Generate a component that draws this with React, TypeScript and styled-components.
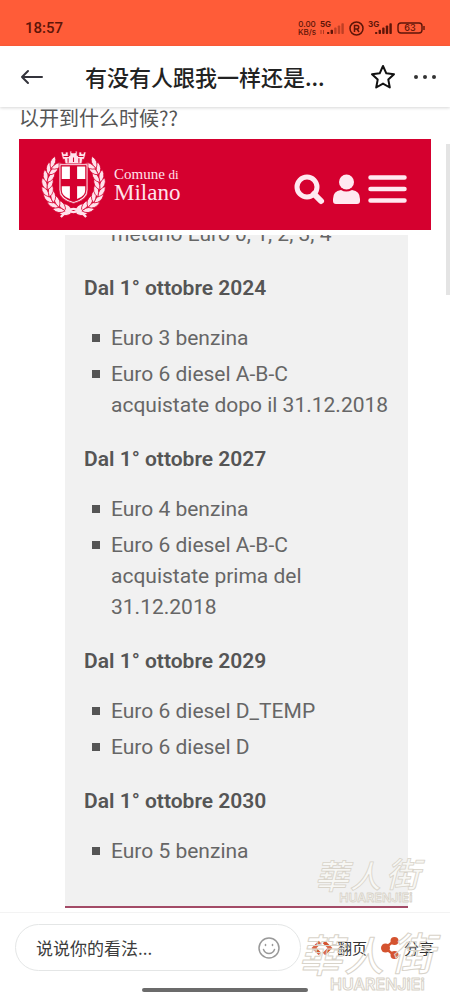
import React from "react";
import styled, { createGlobalStyle } from "styled-components";

const Global = createGlobalStyle`
  *, *::before, *::after { box-sizing: border-box; }
  body { margin: 0; background: #fff; font-family: "Noto Sans CJK SC", sans-serif; }
  button, input { font: inherit; color: inherit; border: 0; background: none; padding: 0; margin: 0; }
  h1, h2, p, ul { margin: 0; padding: 0; font-weight: inherit; }
  svg { display: block; flex: none; overflow: visible; }
`;

const Screen = styled.div`
  min-height: 100vh;
  display: flex;
  flex-direction: column;
`;

const StatusBar = styled.div`
  height: 46px;
  padding: 10px 25px 0 25px;
  display: flex;
  align-items: center;
  justify-content: space-between;
  background: #ff5c38;
  color: #5e1508;
`;

const Clock = styled.span`
  font: 500 15px/20px Roboto, sans-serif;
`;

const StatusIcons = styled.div`
  display: flex;
  align-items: center;
  gap: 4px;
`;

const NetSpeed = styled.span`
  font: 500 8px/8px Inter, sans-serif;
  text-align: center;
`;

const TitleBar = styled.header`
  position: relative;
  height: 61px;
  padding: 0 13px 0 20px;
  display: flex;
  align-items: center;
  color: #222;
  background: #fff;
  box-shadow: 0 1px 3px rgba(0, 0, 0, 0.16);
`;

const Title = styled.h1`
  flex: 1;
  margin: 0 32px 0 41px;
  padding-bottom: 2px;
  font-size: 22px;
  line-height: 32px;
  font-weight: 500;
  white-space: nowrap;
  overflow: hidden;
`;

const IconButton = styled.button`
  display: flex;
  align-items: center;
  justify-content: center;
  & + & { margin-left: 17px; }
`;

const Content = styled.main`
  position: relative;
  flex: 1;
  padding: 0 19px 4px;
`;

const ScrollThumb = styled.div`
  position: absolute;
  top: 37px;
  right: 0;
  width: 4px;
  height: 151px;
  background: #e4e4e4;
`;

const PostText = styled.p`
  font-size: 20px;
  line-height: 22px;
  padding-bottom: 10px;
  color: #555;
`;

const SiteHeader = styled.div`
  height: 91px;
  padding: 0 24px 0 22px;
  display: flex;
  align-items: center;
  background: #d5002f;
  color: #ffe3ec;
`;

const Brand = styled.div`
  flex: 1;
  margin-left: 8px;
  font-family: "Liberation Serif", serif;
`;

const BrandTop = styled.div`
  font-size: 15px;
  line-height: 16px;
`;

const BrandSmall = styled.span`
  font-size: 13px;
`;

const BrandName = styled.div`
  font-size: 23px;
  line-height: 20px;
`;

const SiteActions = styled.div`
  display: flex;
  align-items: center;
  gap: 8px;
  padding-top: 8px;
`;

const SiteButton = styled.button`
  display: block;
  color: #ffe9f1;
`;

const Panel = styled.section`
  margin: 5px 23px 0 46px;
  padding: 0 19px 39px;
  background: #f1f1f1;
  border-bottom: 2px solid #a34b67;
  color: #666;
  font: 400 21px/31px Roboto, sans-serif;
`;

const Clipped = styled.div`
  height: 15px;
  padding-left: 27px;
  display: flex;
  align-items: flex-end;
  overflow: hidden;
`;

const Heading = styled.h2`
  margin: 23px 0 19px;
  font-size: 21px;
  line-height: 31px;
  font-weight: 600;
  color: #555;
`;

const List = styled.ul`
  list-style: none;
  display: flex;
  flex-direction: column;
  gap: 5px;
`;

const Item = styled.li`
  display: flex;
  gap: 11px;
  padding-left: 8px;
  &::before {
    content: "";
    flex: none;
    width: 8px;
    height: 8px;
    margin-top: 11px;
    background: #555;
  }
`;

const Footer = styled.footer`
  position: relative;
  height: 88px;
  padding: 11px 16px 0 15px;
  border-top: 1px solid #f3f3f3;
  background: #fff;
`;

const FooterRow = styled.div`
  display: flex;
  align-items: center;
`;

const CommentBox = styled.label`
  flex: 1;
  min-width: 0;
  height: 47px;
  margin-right: 10px;
  padding: 0 20px;
  display: flex;
  align-items: center;
  border: 1px solid #e4e6e6;
  border-radius: 24px;
`;

const CommentInput = styled.input`
  flex: 1;
  min-width: 0;
  font-size: 17px;
  line-height: 24px;
  outline: 0;
  &::placeholder { color: #3c3c3c; opacity: 1; }
`;

const Action = styled.button`
  display: flex;
  align-items: center;
  gap: 4px;
  font-size: 15px;
  line-height: 22px;
  color: #333;
  & + & { margin-left: 14px; }
`;

const HomeBar = styled.div`
  position: absolute;
  left: 50%;
  bottom: 8px;
  width: 166px;
  height: 4px;
  margin-left: -83px;
  border-radius: 2px;
  background: #6b6b6b;
`;

const Mark = styled.div<{ $right: number; $bottom: number; $fill: string }>`
  position: absolute;
  right: ${(p) => p.$right}px;
  bottom: ${(p) => p.$bottom}px;
  pointer-events: none;
  color: ${(p) => p.$fill};
`;

function Watermark({ large, right, bottom }: { large?: boolean; right: number; bottom: number }) {
  const w = large ? 142 : 110;
  return (
    <Mark $right={right} $bottom={bottom} $fill={large ? "rgba(255,255,255,0.15)" : "#f7f7f4"}>
      <svg width={w} height={large ? 62 : 48} viewBox="0 0 142 62" fill="currentColor" stroke="#d8d3c9" strokeWidth="1" strokeLinejoin="round">
        <g fontFamily="Noto Sans CJK TC, sans-serif" fontWeight="500" fontStyle="italic">
          <text x="-2" y="42" fontSize="44">華</text>
          <text x="44" y="41" fontSize="40">人</text>
          <text x="90" y="40" fontSize="44">街</text>
        </g>
        <text x="30" y="60" fontSize="16" fontFamily="Inter, sans-serif" fontWeight="600">HUARENJiEi</text>
      </svg>
    </Mark>
  );
}

function Signal({ strong }: { strong?: boolean }) {
  return (
    <svg width="25" height="16" viewBox="0 0 25 16" fill="currentColor">
      <text x="0" y="7" fontSize="8" fontWeight="700" fontFamily="Inter, sans-serif">{strong ? "3G" : "5G"}</text>
      {!strong && <path d="M1 10v4M3.500 10v4" stroke="currentColor" strokeWidth="1" opacity=".5" />}
      {[0, 1, 2, 3, 4].map((i) => (
        <rect key={i} x={7 + i * 3.6} y={12 - i * 2.200} width="2.400" height={2 + i * 2.200} rx=".8" opacity={strong || i < 2 ? 1 : 0.4} />
      ))}
    </svg>
  );
}

const leaves = [
  [29, 67, 200], [22, 64, 212], [16, 59, 228], [11, 53, 244], [8, 46, 258], [7, 38, 272], [8, 30, 284], [11, 22, 298], [15, 16, 312],
];

function Crest() {
  const side = leaves.map(([x, y, a], i) => (
    <g key={i} transform={`translate(${x} ${y}) rotate(${a})`}>
      <path d="M-6 0Q-2-8 7-6Q5 1-6 0Z" />
      <path d="M-6 0Q-2 8 7 6Q5-1-6 0Z" />
    </g>
  ));
  return (
    <svg width="65" height="69" viewBox="0 0 72 76" fill="#ffe3ec" stroke="#d5002f" strokeWidth=".8">
      {side}
      <g transform="translate(72 0) scale(-1 1)">{side}</g>
      <path d="M22 2h3v2h2V2h3v4h2V1h2v2h4V1h2v5h2V2h3v2h2V2h3l-2 8h-2l-1 6H27l-1-6h-2Z" />
      <path d="M30 9v5M36 8v5M42 9v5M25 7h6M41 7h6" strokeWidth="1.200" />
      <path d="M20 15h32v29q0 11-16 15Q20 55 20 44Z" />
      <path d="M22 17h28v27q0 9-14 13Q22 53 22 44Z" fill="#d5002f" />
      <path d="M23 18h9v14h-9ZM40 18h9v14h-9ZM23 40h9v14q-9-3-9-10ZM40 40h9v4q0 7-9 10Z" fill="#fff" stroke="none" />
      <path d="M22 74q8-9 14-9t14 9M27 66q9 5 18 0" fill="none" stroke="#ffe3ec" strokeWidth="2.500" />
    </svg>
  );
}

const sections = [
  { title: "Dal 1° ottobre 2024", items: ["Euro 3 benzina", "Euro 6 diesel A-B-C acquistate dopo il 31.12.2018"] },
  { title: "Dal 1° ottobre 2027", items: ["Euro 4 benzina", "Euro 6 diesel A-B-C acquistate prima del 31.12.2018"] },
  { title: "Dal 1° ottobre 2029", items: ["Euro 6 diesel D_TEMP", "Euro 6 diesel D"] },
  { title: "Dal 1° ottobre 2030", items: ["Euro 5 benzina"] },
];

export default function App() {
  return (
    <Screen>
      <Global />
      <StatusBar>
        <Clock>18:57</Clock>
        <StatusIcons>
          <NetSpeed>0.00<br />KB/s</NetSpeed>
          <Signal />
          <svg width="15" height="15" viewBox="0 0 15 15" fill="none" stroke="currentColor" strokeWidth="1.500">
            <circle cx="7.500" cy="7.500" r="6.500" />
            <path d="M5.500 11V4.500h2.500a1.700 1.700 0 0 1 0 3.500H5.500M8 8l2 3" />
          </svg>
          <Signal strong />
          <svg width="28" height="12" viewBox="0 0 28 12" fill="none" stroke="currentColor" strokeWidth="1.400">
            <rect x="1" y="1" width="24" height="10" rx="3" />
            <path d="M27 4v4" />
            <text x="13" y="9" fontSize="9" textAnchor="middle" fill="currentColor" stroke="none" fontFamily="Inter, sans-serif" fontWeight="500">63</text>
          </svg>
        </StatusIcons>
      </StatusBar>
      <TitleBar>
        <IconButton aria-label="返回">
          <svg width="24" height="20" viewBox="0 0 24 20" fill="none" stroke="#34343c" strokeWidth="2" strokeLinecap="round" strokeLinejoin="round">
            <path d="M22 10H2M8 4l-6 6 6 6" />
          </svg>
        </IconButton>
        <Title>有没有人跟我一样还是...</Title>
        <IconButton aria-label="收藏">
          <svg width="26" height="26" viewBox="0 0 26 26" fill="none" stroke="#111" strokeWidth="2" strokeLinejoin="round">
            <path d="M13 2l3.300 7.300 7.700.9-5.700 5.400 1.500 7.900L13 19.600l-6.800 3.900 1.500-7.900L2 10.200l7.700-.9Z" />
          </svg>
        </IconButton>
        <IconButton aria-label="更多">
          <svg width="24" height="6" viewBox="0 0 24 6" fill="#333">
            <circle cx="3" cy="3" r="2" /><circle cx="12" cy="3" r="2" /><circle cx="21" cy="3" r="2" />
          </svg>
        </IconButton>
      </TitleBar>
      <Content>
        <PostText>以开到什么时候??</PostText>
        <SiteHeader>
          <Crest />
          <Brand>
            <BrandTop>Comune <BrandSmall>di</BrandSmall></BrandTop>
            <BrandName>Milano</BrandName>
          </Brand>
          <SiteActions>
            <SiteButton aria-label="Cerca">
              <svg width="31" height="32" viewBox="0 0 31 32" fill="none" stroke="currentColor">
                <circle cx="13" cy="14" r="10" strokeWidth="5" />
                <path d="M20 21l7 7" strokeWidth="6" strokeLinecap="round" />
              </svg>
            </SiteButton>
            <SiteButton aria-label="Profilo">
              <svg width="27" height="32" viewBox="0 0 27 32" fill="currentColor">
                <circle cx="13.500" cy="9" r="7.500" />
                <path d="M0 28v-2Q0 18 8 17q5 3 11 0 8 1 8 9v2q0 3-3 3H3q-3 0-3-3Z" />
              </svg>
            </SiteButton>
            <SiteButton aria-label="Menu">
              <svg width="39" height="32" viewBox="0 0 39 32" stroke="currentColor" strokeWidth="4.500" strokeLinecap="round">
                <path d="M2.500 4.500h34M2.500 16h34M2.500 27.500h34" />
              </svg>
            </SiteButton>
          </SiteActions>
        </SiteHeader>
        <Panel>
          <Clipped>metano Euro 0, 1, 2, 3, 4</Clipped>
          {sections.map((s) => (
            <React.Fragment key={s.title}>
              <Heading>{s.title}</Heading>
              <List>{s.items.map((t) => <Item key={t}>{t}</Item>)}</List>
            </React.Fragment>
          ))}
        </Panel>
        <ScrollThumb />
        <Watermark right={24} bottom={8} />
      </Content>
      <Footer>
        <FooterRow>
          <CommentBox>
            <CommentInput aria-label="评论" placeholder="说说你的看法..." />
            <svg width="22" height="22" viewBox="0 0 22 22" fill="none" stroke="#999" strokeWidth="1.500" strokeLinecap="round">
              <circle cx="11" cy="11" r="10" />
              <path d="M5.500 12.500q1.500 4 5.500 4t5.500-4M7.500 7.500v1M14.500 7.500v1" />
            </svg>
          </CommentBox>
          <Action>
            <svg width="22" height="20" viewBox="0 0 22 20" fill="none" stroke="#d4532f" strokeWidth="3.500">
              <path d="M9 4l-6 6 6 6M13 4l6 6-6 6" />
            </svg>
            翻页
          </Action>
          <Action>
            <svg width="19" height="22" viewBox="0 0 19 22" fill="#d4532f" stroke="#d4532f" strokeWidth="2.500">
              <path d="M13 4L4 11l9 7" fill="none" />
              <g stroke="none"><circle cx="13.500" cy="4" r="4" /><circle cx="4.500" cy="11" r="4.500" /><circle cx="13.500" cy="18" r="4" /></g>
            </svg>
            分享
          </Action>
        </FooterRow>
        <HomeBar />
        <Watermark large right={8} bottom={8} />
      </Footer>
    </Screen>
  );
}
